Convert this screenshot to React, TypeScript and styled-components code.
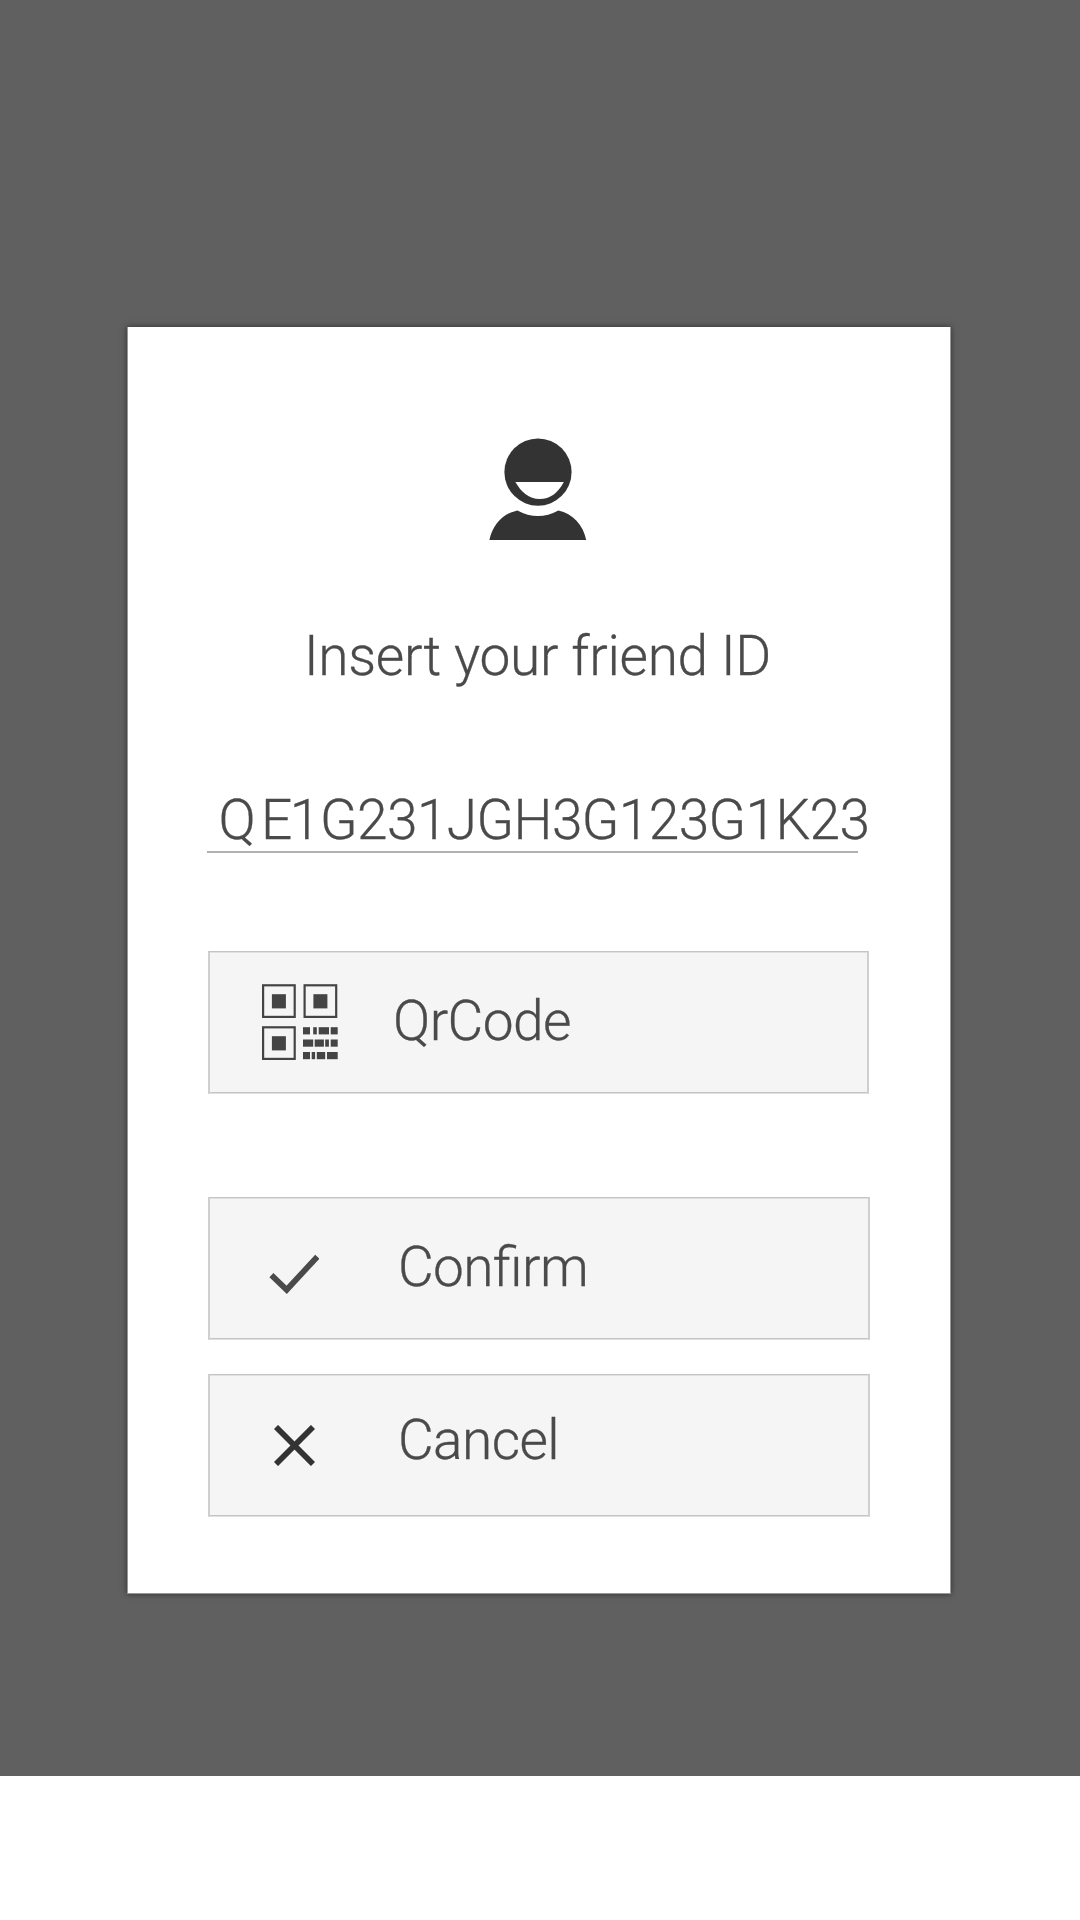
import React from "react";
import styled, { createGlobalStyle } from "styled-components";

const GlobalStyle = createGlobalStyle`
  * { box-sizing: border-box; }
  body {
    margin: 0;
    background: #fff;
    font-family: Roboto, "Liberation Sans", sans-serif;
    font-weight: 300;
    color: #4a4a4a;
    -webkit-text-stroke: 0.3px #4a4a4a;
  }
`;

const Backdrop = styled.main`
  display: flex;
  justify-content: center;
  height: 1776px;
  padding: 327px 2px 0 0;
  background: #606060;
`;

const Dialog = styled.section`
  display: flex;
  flex-direction: column;
  width: 824px;
  height: 1267px;
  padding: 111px 80px 0;
  background: #fff;
  border: solid #979797;
  border-width: 0 1px 1px;
  box-shadow: 0 0 6px rgba(0, 0, 0, 0.5);
`;

const Avatar = styled.svg`
  align-self: center;
  width: 98px;
  height: 102px;
  margin-right: 2px;
`;

const Title = styled.h1`
  margin: 84px 0 0;
  padding-right: 3px;
  text-align: center;
  font-size: 55px;
  line-height: 64px;
  font-weight: 300;
  letter-spacing: -0.3px;
`;

const Field = styled.div`
  width: 651px;
  height: 65px;
  margin: 100px 0 98px -1px;
  padding-left: 11.5px;
  border-bottom: 2px solid #b0b0b0;
  font-size: 55px;
  line-height: 64px;
  letter-spacing: -0.6px;
  white-space: nowrap;
`;

const Spaced = styled.span<{ $by: number }>`
  letter-spacing: ${(p) => p.$by}px;
`;

const Button = styled.button<{ $gap?: number; $width?: number; $inset: number }>`
  display: flex;
  align-items: flex-start;
  width: ${(p) => p.$width ?? 662}px;
  height: 143px;
  flex: none;
  margin: ${(p) => p.$gap ?? 0}px 0 0;
  padding: 0 0 0 ${(p) => p.$inset}px;
  background: #f5f5f5;
  border-style: solid;
  border-width: 1px 2px;
  border-color: #c4c4c4 #cfcfcf #e0e0e0;
  box-shadow: inset 0 1px #e0e0e0, inset 0 -1px #c4c4c4;
  color: inherit;
  font: inherit;
  font-size: 55px;
  line-height: 64px;
`;

const Glyph = styled.svg<{ $w: number; $h: number; $top: number }>`
  flex: none;
  width: ${(p) => p.$w}px;
  height: ${(p) => p.$h}px;
  margin-top: ${(p) => p.$top}px;
`;

const Label = styled.span<{ $space: number; $top?: number }>`
  margin: ${(p) => p.$top ?? 37}px 0 0 ${(p) => p.$space}px;
  letter-spacing: -0.6px;
  font-feature-settings: "liga" 1;
`;

const finders = [[0, 0.2], [41.5, 0.2], [0, 42.2]];
const bars = [
  [41, 43.2, 7], [51.2, 43.2, 3.6], [56.7, 43.2, 10.3], [68.7, 43.2, 7],
  [41, 55.5, 10.2], [52.7, 55.5, 9.2], [63.2, 55.5, 3.7], [68.7, 55.5, 7],
  [41, 68, 7], [49.7, 68, 3.4], [54.8, 68, 8.4], [65, 68, 10.7],
];

export default function App() {
  return (
    <>
      <GlobalStyle />
      <Backdrop>
        <Dialog>
          <Avatar viewBox="489 438 98 102" fill="#333">
            <circle cx="538" cy="472.1" r="33.6" />
            <path fill="#fff" d="M515.4 482H563.8C558 493 550 499 539.6 499C529 499 521 492 515.4 482Z" />
            <path d="M489.4 540C492.5 525 503 513.5 517.4 510.4Q538 521.5 558.4 510.4C572.5 513.5 583.5 525 586.2 540Z" />
          </Avatar>
          <Title>Insert your friend ID</Title>
          <Field>
            <Spaced $by={5.3}>Q</Spaced>
            <Spaced $by={-2.7}>E</Spaced>
            <Spaced $by={-0.1}>1</Spaced>
            G231JGH3G123G1K23
          </Field>
          <Button $width={661} $inset={52}>
            <Glyph $w={76} $h={77} $top={32} viewBox="0 0 76 77" fill="#444">
              {finders.map(([x, y]) => (
                <g key={`${x}-${y}`}>
                  <rect x={x + 1.1} y={y + 1.1} width="31.6" height="31.6" fill="none" stroke="#444" strokeWidth="2.2" />
                  <rect x={x + 9.9} y={y + 10} width="14" height="14.2" />
                </g>
              ))}
              {bars.map(([x, y, w]) => (
                <rect key={`${x}-${y}`} x={x} y={y} width={w} height="7.2" />
              ))}
            </Glyph>
            <Label $space={55}>QrCode</Label>
          </Button>
          <Button $gap={103} $inset={59}>
            <Glyph $w={50} $h={41} $top={56} viewBox="269 1254 50 41" fill="none" stroke="#4a4a4a" strokeWidth="5.8">
              <path d="M271.4 1275.1L286.7 1289.8L317.3 1256.7" />
            </Glyph>
            <Label $space={79}>Confirm</Label>
          </Button>
          <Button $gap={34} $inset={64}>
            <Glyph $w={41} $h={41} $top={50} viewBox="274 1425 41 41" fill="none" stroke="#333" strokeWidth="5.8">
              <path d="M276 1427L313 1464M313 1427L276 1464" />
            </Glyph>
            <Label $space={83} $top={33}>Cancel</Label>
          </Button>
        </Dialog>
      </Backdrop>
    </>
  );
}
